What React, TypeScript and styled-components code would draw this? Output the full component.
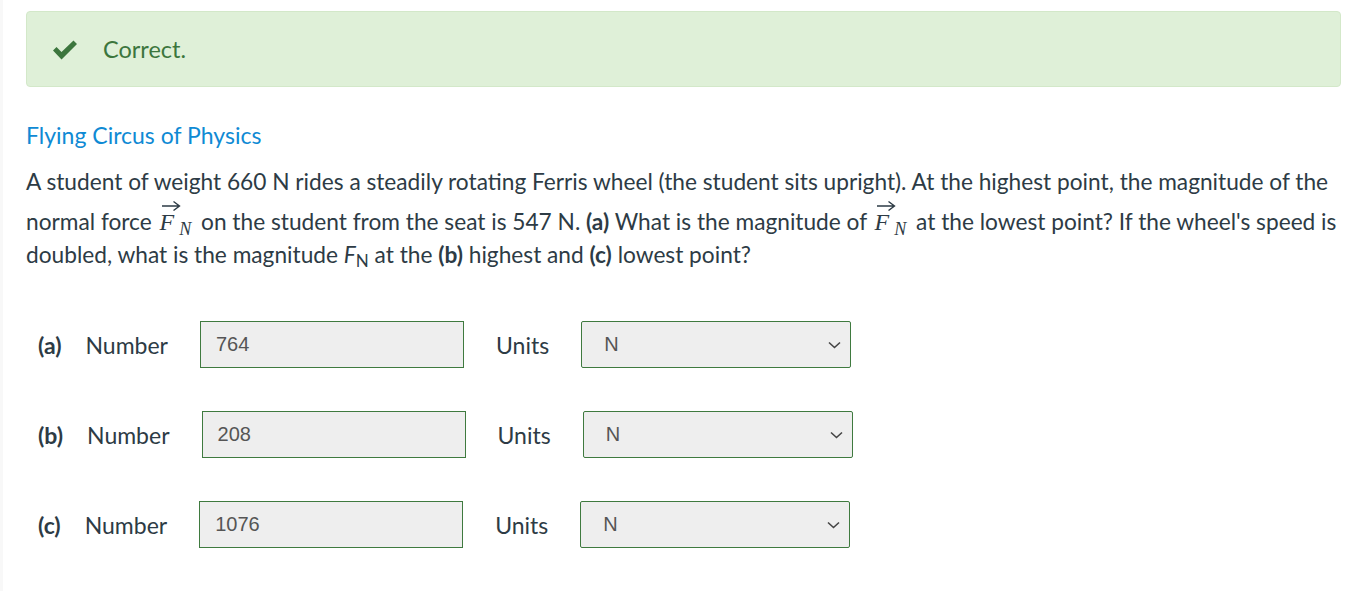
import React from 'react';
import styled, { createGlobalStyle } from 'styled-components';

const GlobalStyle = createGlobalStyle`
  body {
    margin: 0;
    background: #fff;
    font-family: Lato, "Open Sans", sans-serif;
    color: #2d3b45;
  }
`;

const Page = styled.div`
  box-sizing: border-box;
  min-height: 100vh;
  padding: 11px 17px 40px 23px;
  border-left: 3px solid #f8f8f8;
`;

const Alert = styled.div`
  display: flex;
  align-items: center;
  height: 74px;
  padding-left: 24px;
  background: #dff0d8;
  border: 1px solid #d3e8c9;
  border-radius: 4px;
  color: #3c763d;
  font-size: 23.5px;
`;

const CheckIcon = styled.svg`
  width: 28px;
  height: 20px;
  margin-right: 24px;
  margin-top: 2px;
  fill: #3c763d;
`;

const Title = styled.div`
  margin-top: 33px;
  color: #0f8ad4;
  font-size: 23px;
  line-height: 30px;
`;

const Question = styled.p`
  margin: 15px 0 0;
  font-size: 22.7px;
  line-height: 33px;
`;

const Math = styled.span`
  display: inline-block;
  position: relative;
  font-family: "Liberation Serif", "Times New Roman", serif;
  font-style: italic;
  font-size: 24px;
  line-height: 24px;
  margin: 0 4px 0 2px;
  padding-top: 12px;
  vertical-align: baseline;
`;

const Arrow = styled.svg`
  position: absolute;
  left: 1px;
  top: 2px;
  width: 20px;
  height: 11px;
`;

const Sub = styled.sub`
  font-size: 18px;
  line-height: 0;
  vertical-align: -5px;
  margin-left: 5px;
`;

const PlainSub = styled.sub`
  font-size: 17px;
  line-height: 0;
  vertical-align: -4px;
`;

const Rows = styled.div`
  margin-top: 50px;
  display: flex;
  flex-direction: column;
  gap: 43px;
`;

const Row = styled.div`
  display: flex;
  align-items: center;
  padding-left: 12px;
  font-size: 23px;
`;

const Part = styled.b`
  font-weight: 700;
  margin-right: 24px;
`;

const Label = styled.span`
  margin-right: 32px;
`;

const Field = styled.div<{ $w: number }>`
  box-sizing: border-box;
  display: flex;
  align-items: center;
  justify-content: space-between;
  width: ${p => p.$w}px;
  height: 47px;
  padding: 0 9px 0 15px;
  background: #eeeeee;
  border: 1px solid #3f7a3f;
  border-radius: ${p => (p.$w > 265 ? '2px' : '0')};
  font-family: "Liberation Sans", Arial, sans-serif;
  font-size: 20px;
  color: #555;
  margin-right: 32px;
`;

const SelectText = styled.span`
  padding-left: 7px;
`;

const Chevron = styled.svg`
  width: 13px;
  height: 8px;
`;

const rows = [
  { part: '(a)', value: '764' },
  { part: '(b)', value: '208' },
  { part: '(c)', value: '1076' },
];

const Vec: React.FC = () => (
  <Math>
    <Arrow viewBox="0 0 20 11">
      <path d="M1 6 H18 M12.5 1.5 L18.5 6 L12.5 10.5" stroke="#2d3b45" strokeWidth="1.4" fill="none" />
    </Arrow>
    F<Sub>N</Sub>
  </Math>
);

const App: React.FC = () => (
  <Page>
    <GlobalStyle />
    <Alert>
      <CheckIcon viewBox="0 0 28 20">
        <path d="M2 10.5 L5.5 7 L10.5 12 L22.5 0.5 L26 4 L10.5 19.5 Z" />
      </CheckIcon>
      Correct.
    </Alert>
    <Title>Flying Circus of Physics</Title>
    <Question>
      A student of weight 660 N rides a steadily rotating Ferris wheel (the student sits upright). At the
      highest point, the magnitude of the normal force <Vec /> on the student from the seat is 547 N.{' '}
      <b>(a)</b> What is the magnitude of <Vec /> at the lowest point? If the wheel's speed is doubled,
      what is the magnitude <i>F</i>
      <PlainSub>N</PlainSub> at the <b>(b)</b> highest and <b>(c)</b> lowest point?
    </Question>
    <Rows>
      {rows.map(r => (
        <Row key={r.part}>
          <Part>{r.part}</Part>
          <Label>Number</Label>
          <Field $w={264}>{r.value}</Field>
          <Label>Units</Label>
          <Field $w={270}>
            <SelectText>N</SelectText>
            <Chevron viewBox="0 0 13 8">
              <path d="M1 1.5 L6.5 6.5 L12 1.5" stroke="#444" strokeWidth="1.6" fill="none" />
            </Chevron>
          </Field>
        </Row>
      ))}
    </Rows>
  </Page>
);

export default App;
